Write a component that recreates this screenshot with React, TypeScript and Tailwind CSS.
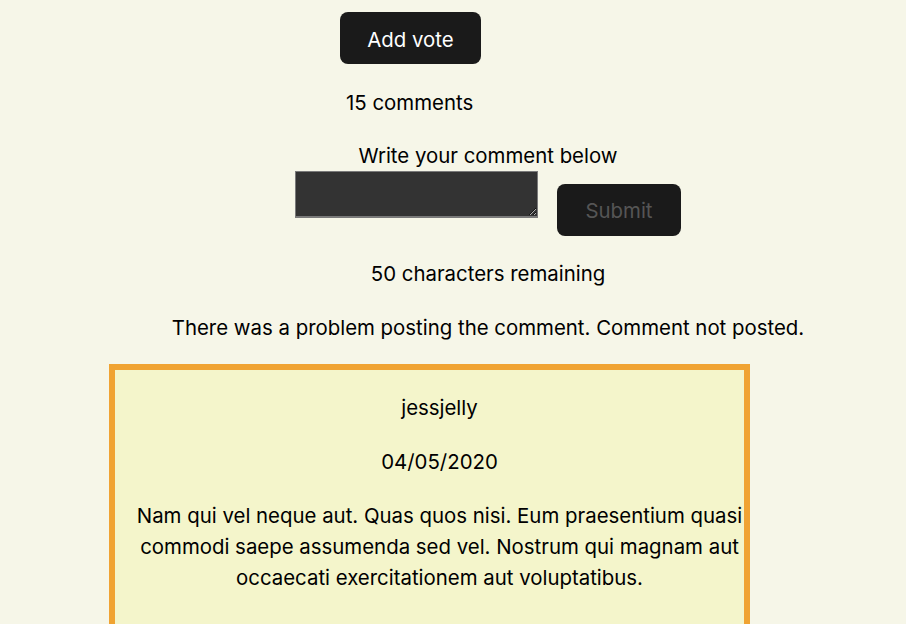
export default function App() {
  return (
    <div className="min-h-[624px] w-[906px] overflow-hidden bg-[#f6f6e8] text-[20.4px] leading-[30px] text-black [font-family:Inter,'Noto_Sans',sans-serif]">
      <div className="pt-3">
        <button className="ml-[340px] h-[52px] w-[141px] rounded-lg bg-[#1a1a1a] pt-1 text-[20.4px] text-white">
          Add vote
        </button>
      </div>
      <p className="ml-[346px] mt-[24px]">15 comments</p>

      <form className="mt-[23px] flex flex-col items-center pl-[70px]">
        <label htmlFor="comment">Write your comment below</label>
        <div className="flex items-start gap-[19px]">
          <textarea
            id="comment"
            className="h-[47px] w-[243px] border border-b-2 border-[#7a7a7a] bg-[#333333]"
          />
          <button
            type="button"
            disabled
            className="mt-[13px] h-[52px] w-[124px] rounded-lg bg-[#1a1a1a] pt-0.5 text-[20.4px] text-[#555555]"
          >
            Submit
          </button>
        </div>
        <p className="mt-[23px]">50 characters remaining</p>
        <p className="mt-[24px]">There was a problem posting the comment. Comment not posted.</p>
      </form>

      <div className="ml-[109px] mt-[21px] w-[641px] border-[6px] border-[#f0a332] bg-[#f4f5cb] pb-8 pl-5 pt-[23px] text-center">
        <p>jessjelly</p>
        <p className="mt-[24px]">04/05/2020</p>
        <p className="mt-[23px] leading-[31px]">
          Nam qui vel neque aut. Quas quos nisi. Eum praesentium quasi commodi saepe assumenda sed vel.
          Nostrum qui magnam aut occaecati exercitationem aut voluptatibus.
        </p>
      </div>
    </div>
  );
}
